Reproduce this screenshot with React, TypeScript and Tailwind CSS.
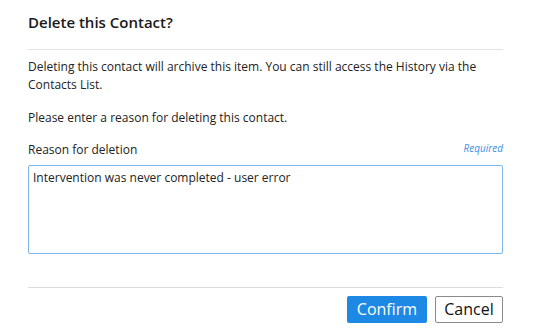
export default function App() {
  return (
    <div
      className="w-[534px] h-[334px] bg-white text-[#222] pl-[28px] pr-[31px] pt-[12px]"
      style={{ fontFamily: '"Open Sans", "Noto Sans", sans-serif' }}
    >
      <h2 className="text-[15px] leading-[20px] font-semibold text-[#1a1a1a]">Delete this Contact?</h2>
      <div className="mt-[17px] h-px bg-[#e3e3e3]" />

      <p className="mt-[8px] text-[12px] leading-[18px]">
        Deleting this contact will archive this item. You can still access the History via the Contacts List.
      </p>
      <p className="mt-[15px] text-[12px] leading-[18px]">Please enter a reason for deleting this contact.</p>

      <div className="mt-[12px] flex items-end justify-between">
        <label className="text-[12px] leading-[18px]">Reason for deletion</label>
        <span className="text-[10px] leading-[18px] italic text-[#3d8fe8] mb-[2px]">Required</span>
      </div>

      <textarea
        className="mt-[6px] block w-full h-[89px] resize-none rounded-[2px] border border-[#7db6ee] px-[4px] py-[3px] text-[12px] leading-[18px] text-[#222] outline-none"
        defaultValue="Intervention was never completed - user error"
      />

      <div className="mt-[33px] h-px bg-[#dcdcdc]" />

      <div className="mt-[8px] flex justify-end gap-[8px]">
        <button className="h-[27px] w-[80px] rounded-[2px] bg-[#1e88e5] text-[16px] leading-[27px] text-white">
          Confirm
        </button>
        <button className="h-[27px] w-[68px] rounded-[2px] border border-[#8a8a8a] bg-white text-[16px] leading-[25px] text-[#111]">
          Cancel
        </button>
      </div>
    </div>
  );
}
